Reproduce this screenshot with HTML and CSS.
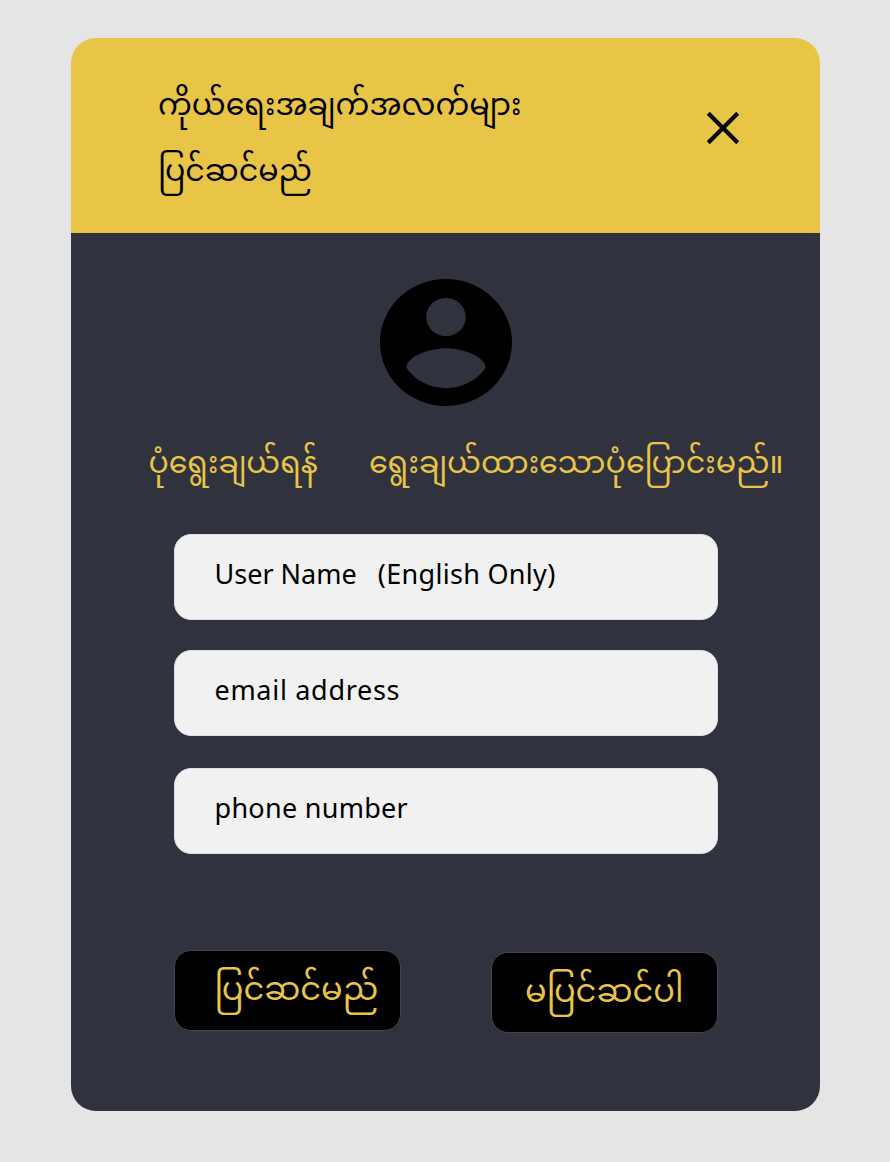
FILE: index.html
```
<!DOCTYPE html>
<html lang="my">
<head>
<meta charset="utf-8">
<title>ကိုယ်ရေးအချက်အလက်များ ပြင်ဆင်မည်</title>
<link rel="stylesheet" href="styles.css">
</head>
<body>
<main class="card">
  <header class="head">
    <h1 class="title"><span class="line">ကိုယ်ရေးအချက်အလက်များ</span><span class="line">ပြင်ဆင်မည်</span></h1>
    <svg class="close" viewBox="0 0 32 32"><path d="M1.300 1.300 30.700 30.700M30.700 1.300 1.300 30.700" stroke="#000" stroke-width="4.200"/></svg>
  </header>
  <section class="body">
    <svg class="avatar" viewBox="2 2 20 20" preserveAspectRatio="none"><path d="M12 2C6.480 2 2 6.480 2 12s4.480 10 10 10 10-4.480 10-10S17.520 2 12 2zm0 3c1.660 0 3 1.340 3 3s-1.340 3-3 3-3-1.340-3-3 1.340-3 3-3zm0 14.200c-2.500 0-4.710-1.280-6-3.220.030-1.990 4-3.080 6-3.080 1.990 0 5.970 1.090 6 3.080-1.290 1.940-3.500 3.220-6 3.220z"/></svg>
    <div class="links"><span class="line">ပုံရွေးချယ်ရန်</span><span class="line change">ရွေးချယ်ထားသောပုံပြောင်းမည်။</span></div>
    <div class="field">User Name &nbsp; <span class="hint">(English Only)</span></div>
    <div class="field email">email address</div>
    <div class="field phone">phone number</div>
    <div class="actions">
      <div class="btn save"><span class="line">ပြင်ဆင်မည်</span></div>
      <div class="btn cancel"><span class="line">မပြင်ဆင်ပါ</span></div>
    </div>
  </section>
</main>
</body>
</html>
```
FILE: styles.css
```
* { box-sizing: border-box; }
body { margin: 0; padding: 38px 70px 0 71px; height: 1162px; background: #e5e5e5; font-family: "Noto Sans Myanmar", "Noto Sans", sans-serif; overflow: hidden; }
.card { height: 1073px; border-radius: 25px; background: linear-gradient(#e8c547 195px, #30323d 195px); }
.head { display: flex; justify-content: space-between; height: 195px; padding: 37px 81px 0 87px; }
.title { margin: 0; font-size: 30.08px; font-weight: 400; }
.line { display: block; width: max-content; white-space: nowrap; line-height: 66px; }
.close { width: 32px; height: 32px; margin-top: 37px; }
.body { display: flex; flex-direction: column; padding: 46px 102px 0 103px; }
.avatar { width: 132px; height: 127px; margin-left: 205.5px; }
.links { display: flex; gap: 51px; height: 66px; margin: 27px -80px 0 -25.5px; color: #e8c547; font-size: 30px; }
.change { font-size: 30.2px; }
.field { width: 544px; height: 86px; margin-top: 30px; margin-left: -0.5px; padding-left: 40px; border: 1px solid #dcdee6; border-radius: 17px; background: #f1f1f1; color: #000; font: 27px/78px "Noto Sans", sans-serif; }
.links + .field { margin-top: 35px; }
.hint { letter-spacing: 0.3px; }
.email { letter-spacing: 0.7px; }
.phone { margin-top: 32px; letter-spacing: 0.28px; }
.actions { display: flex; justify-content: space-between; margin: 96px 0 0 -0.5px; }
.btn { width: 227px; height: 81px; border: 1px solid #42434e; border-radius: 17px; background: #000; color: #e8c547; font-size: 32px; padding: 9px 0 0 40px; }
.cancel { margin-top: 2px; padding-left: 33px; }
```
